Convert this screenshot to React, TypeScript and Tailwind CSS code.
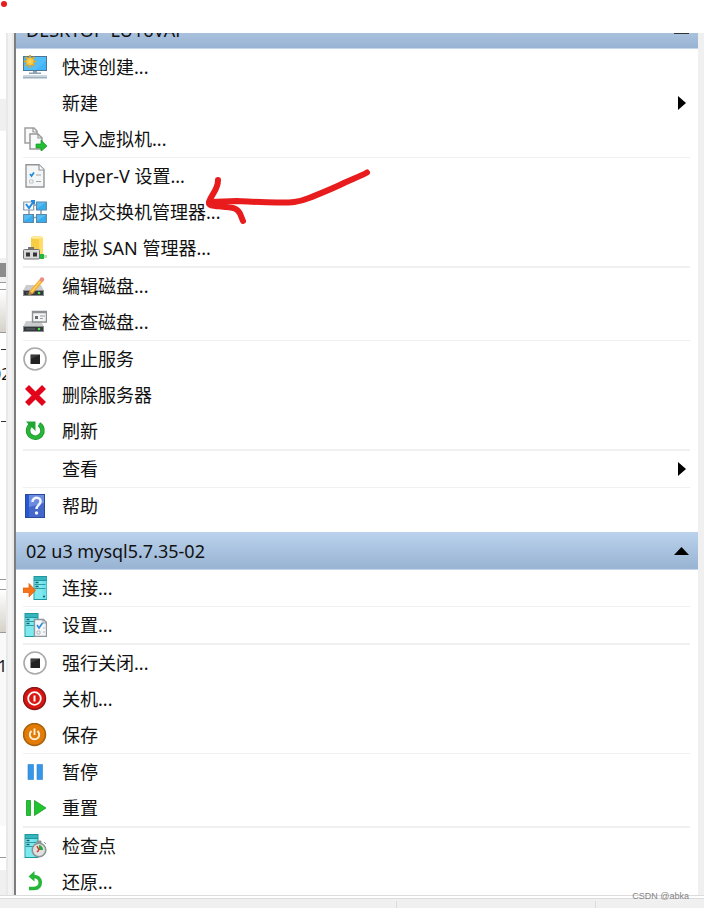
import React from 'react';

type IconName =
    | 'quickCreate' | 'import' | 'settings' | 'switch' | 'san' | 'editDisk' | 'inspectDisk'
    | 'stop' | 'remove' | 'refresh' | 'help' | 'connect' | 'vmSettings' | 'shutdown'
    | 'save' | 'pause' | 'reset' | 'checkpoint' | 'revert';

interface ActionItem {
    label: string;
    icon?: IconName;
    submenu?: boolean;
}

const hostActions: ActionItem[][] = [
    [
        {label: '快速创建...', icon: 'quickCreate'},
        {label: '新建', submenu: true},
        {label: '导入虚拟机...', icon: 'import'}
    ],
    [
        {label: 'Hyper-V 设置...', icon: 'settings'},
        {label: '虚拟交换机管理器...', icon: 'switch'},
        {label: '虚拟 SAN 管理器...', icon: 'san'}
    ],
    [
        {label: '编辑磁盘...', icon: 'editDisk'},
        {label: '检查磁盘...', icon: 'inspectDisk'}
    ],
    [
        {label: '停止服务', icon: 'stop'},
        {label: '删除服务器', icon: 'remove'},
        {label: '刷新', icon: 'refresh'}
    ],
    [{label: '查看', submenu: true}],
    [{label: '帮助', icon: 'help'}]
];

const machineActions: ActionItem[][] = [
    [{label: '连接...', icon: 'connect'}],
    [{label: '设置...', icon: 'vmSettings'}],
    [
        {label: '强行关闭...', icon: 'stop'},
        {label: '关机...', icon: 'shutdown'},
        {label: '保存', icon: 'save'}
    ],
    [
        {label: '暂停', icon: 'pause'},
        {label: '重置', icon: 'reset'}
    ],
    [
        {label: '检查点', icon: 'checkpoint'},
        {label: '还原...', icon: 'revert'}
    ]
];

// Tour de serveur turquoise, 14x24
const Server = () => (
    <>
        <path d="M0 0h14v24H0z" fill="#1f979f"/>
        <path d="M1 1h12v3H1z" fill="#36b5bd"/>
        <path d="M1 5h12v18H1z" fill="#72e2ea"/>
        <path d="M1 5h8v18H1z" fill="#8bf0f5" opacity=".5"/>
        <path d="M1 8.500h11M1 12.500h11" stroke="#2f9aa3"/>
        <path d="M2 6.500h3M2 10.500h3M9.500 20.500h2" stroke="#14626b" strokeWidth="1.500"/>
    </>
);

const Disk = () => (
    <>
        <path d="M3 13h15l3 6H0z" fill="#c9cbcd"/>
        <path d="M0 18h21v6H0z" fill="#8b8e91"/>
        <path d="M1 19h19v4H1z" fill="#35383a"/>
        <path d="M3 21h9" stroke="#65686a"/>
        <circle cx="16" cy="21" r="1.3" fill="#4be04b"/>
    </>
);

const icons: Record<IconName, React.ReactNode> = {
    quickCreate: (
        <>
            <path d="M0 1h24v15H0z" fill="#4a7696"/>
            <path d="M1 2h22v13H1z" fill="#42b4f8"/>
            <path d="M11 2h12v4L13 15H1V9z" fill="#6bcbff" opacity=".4"/>
            <path d="M10 16h4v1.500h4V19H6v-1.500h4z" fill="#8ea2b2"/>
            <path d="M0 20.500h24v3H0z" fill="#9db0c0"/>
            <path d="M0 21.500h24" stroke="#c8d4dc"/>
            <path d="M7 0v13M.8 6.500h12.400M2.500 2l9 9M11.500 2l-9 9" stroke="#eca414" strokeWidth="1.8"/>
            <circle cx="7" cy="6.500" r="3.600" fill="#ffc637"/>
            <circle cx="7" cy="6.500" r="1.500" fill="#ffdb70"/>
        </>
    ),
    import: (
        <>
            <path d="M2 1h9l3 3v12H2z" fill="#f9f9f9" stroke="#a0a0a0" strokeWidth="1.500"/>
            <path d="M7 7h8l4 4v11H7z" fill="#f9f9f9" stroke="#999" strokeWidth="1.500"/>
            <path d="M15 7v4h4M10 1v4h4" fill="none" stroke="#999" strokeWidth="1.200"/>
            <path d="M13 17h5v-4l6 6-6 5.500V21h-5z" fill="#22bd32" stroke="#159925" strokeWidth=".7"/>
        </>
    ),
    settings: (
        <>
            <path d="M3 .800h13l5 4.700V23H3z" fill="#f4f5f6" stroke="#929597" strokeWidth="1.400"/>
            <path d="M16 1v5h5" fill="#fff" stroke="#929597" strokeWidth="1.200"/>
            <path d="M7 10l1.500 2L11 8.500" fill="none" stroke="#208ade" strokeWidth="1.700"/>
            <path d="M6.500 16h3.500v3H6.500z" fill="none" stroke="#c0c3c5"/>
            <path d="M13 11h5M13 17.500h5" stroke="#a2a5a7" strokeWidth="1.200"/>
        </>
    ),
    switch: (
        <>
            <path d="M6 10v4M18 10v4M11 5h3M11 17.500h3" stroke="#8b9ca8" strokeWidth="1.500"/>
            <path d="M.7 2h10v8H.7z" fill="#f9fbfd" stroke="#8c9ba5" strokeWidth="1.200"/>
            <path d="M13.600 2h9.700v8h-9.700zM.7 14.500h9.700v8H.7zM13.600 14.500h9.700v8h-9.700z" fill="#37adf0" stroke="#5b87a5" strokeWidth="1.200"/>
            <path d="M14 2.500h9l-9 6zM1 15h9l-9 6zM14 15h9l-9 6z" fill="#89d3fa" opacity=".4"/>
            <path d="M3 4l3 4 5-7M8 1h3v3" fill="none" stroke="#208be3" strokeWidth="2"/>
        </>
    ),
    san: (
        <>
            <path d="M8 1.500C8-.200 20-.200 20 1.500V19H8z" fill="#f6cd43"/>
            <path d="M8 2c2 1 10 1 12 0v17h-4V3z" fill="#ffdc67"/>
            <ellipse cx="14" cy="1.600" rx="6" ry="1.400" fill="#ffeb9b"/>
            <path d="M16 19h8v3h-8z" fill="#b7dfb9"/>
            <path d="M16 18h5v5h-5z" fill="#27b63c"/>
            <path d="M5 13h6v-2H5z" fill="#777"/>
            <rect x=".5" y="13.500" width="16" height="9.500" rx="1" fill="#d8d8d8" stroke="#737373"/>
            <path d="M3 16.500h4v4H3zM10 16.500h4v4h-4z" fill="#353535"/>
        </>
    ),
    editDisk: (
        <>
            <g transform="translate(0 -2)"><Disk/></g>
            <path d="M5.500 21l1-4L17 5l3 2.500L9.500 20z" fill="#f7ae2e"/>
            <path d="M8 18.500L18.500 6" stroke="#ffd46c" strokeWidth="1.200"/>
            <path d="M5.500 21l1-4 3 2.500z" fill="#b98347"/>
            <circle cx="19" cy="5.500" r="2.200" fill="#ed8a84"/>
        </>
    ),
    inspectDisk: (
        <>
            <g transform="translate(0 -2)"><Disk/></g>
            <path d="M9.500 1.500h14v10.500h-14z" fill="#f3f4f4" stroke="#8d9193" strokeWidth="1.400"/>
            <path d="M10 2.500h13" stroke="#8d9193" strokeWidth="1.500"/>
            <path d="M12 6h3v3h-3z" fill="#666a6d"/>
            <path d="M17 6h5M17 8.500h3" stroke="#999da0"/>
        </>
    ),
    stop: (
        <>
            <circle cx="12" cy="12" r="11" fill="#fff" stroke="#a9a9a9" strokeWidth="1.600"/>
            <path d="M7.500 7.500h9.500v9.500H7.500z" fill="#222"/>
            <path d="M8 8h8l-8 4z" fill="#3c3c3c"/>
        </>
    ),
    remove: <path d="M4 4l17 17M21 4L4 21" fill="none" stroke="#e2041b" strokeWidth="5.600"/>,
    refresh: (
        <>
            <path d="M16 5.300a7.200 7.200 0 1 1-8.500.8" fill="none" stroke="#1e9a2d" strokeWidth="4.500"/>
            <path d="M16 5.300a7.200 7.200 0 1 1-8.500.8" fill="none" stroke="#26b638" strokeWidth="3"/>
            <path d="M3 2.500h9.500V12L9.500 9 6 6z" fill="#22a633"/>
        </>
    ),
    help: (
        <>
            <path d="M2 0h20v24H2z" fill="#28499f"/>
            <path d="M3 1h3v22H3z" fill="#2658d4"/>
            <path d="M6 1h15v22H6z" fill="#6c8ce0"/>
            <path d="M6 23V13L21 9v14z" fill="#4567c9"/>
            <path d="M9.500 8c0-6 9-5.500 8 0-.5 3-4.200 3.500-4 7" fill="none" stroke="#f2f5ff" strokeWidth="2.500"/>
            <circle cx="13.500" cy="19" r="1.700" fill="#f2f5ff"/>
        </>
    ),
    connect: (
        <>
            <g transform="translate(10.500 0)"><Server/></g>
            <path d="M0 12h6V7.500l6.500 6.800L6 21v-4.500H0z" fill="#f77316" stroke="#dd5705" strokeWidth=".7"/>
        </>
    ),
    vmSettings: (
        <>
            <g transform="translate(1.500 0)"><Server/></g>
            <path d="M11.500 6.500h9l3 3v14h-12z" fill="#f5f6f7" stroke="#8e979d" strokeWidth="1.300"/>
            <path d="M20 7v3h3" fill="none" stroke="#8e979d"/>
            <path d="M14 12l2 3 3.500-5" fill="none" stroke="#298edd" strokeWidth="1.600"/>
            <path d="M14 18h3v3h-3zM20 15h2M20 19h2" fill="none" stroke="#b2b9bd"/>
        </>
    ),
    shutdown: (
        <>
            <circle cx="11.500" cy="11.500" r="11" fill="#d9160f" stroke="#8f1717" strokeWidth="1.500"/>
            <circle cx="11.500" cy="11.500" r="6.300" fill="none" stroke="#fff" strokeWidth="1.800"/>
            <path d="M11.500 8.500v6" stroke="#fff" strokeWidth="2"/>
        </>
    ),
    save: (
        <>
            <circle cx="11.500" cy="11.500" r="11" fill="#e37b07" stroke="#a7610e" strokeWidth="1.500"/>
            <path d="M8.500 8a4.700 4.700 0 1 0 6 0M11.500 5.500V12" fill="none" stroke="#fff1d9" strokeWidth="1.900"/>
        </>
    ),
    pause: <path d="M5 4.500h5.500v15H5zM14 4.500h5.500v15H14z" fill="#3697e8" stroke="#2781cf" strokeWidth=".6"/>,
    reset: <path d="M3.500 4.500h4v15h-4zM11.500 4.500L23 12l-11.500 7.500z" fill="#1fc42f" stroke="#149d22" strokeWidth=".8"/>,
    checkpoint: (
        <>
            <g transform="translate(1.500 0)"><Server/></g>
            <circle cx="16" cy="16" r="6.800" fill="#dfe1e1" stroke="#8e9494" strokeWidth="1.600"/>
            <path d="M14 7h4v2h-4zM21 8l2 2" fill="#8e9494" stroke="#8e9494"/>
            <path d="M16 16v-5a5 5 0 0 1 4 5z" fill="#28a83d"/>
            <path d="M16 16l-2-4M16 16l-2 2" stroke="#db3030" strokeWidth="1.500"/>
        </>
    ),
    revert: (
        <>
            <path d="M10 6.500c9-1 10 12 1 12H6" fill="none" stroke="#27b638" strokeWidth="3.600"/>
            <path d="M5.500 6.500L11.500 1v10.500z" fill="#27b638"/>
        </>
    )
};

const ActionRow: React.FC<{ item: ActionItem }> = ({item}) => (
    <button type="button" className="flex w-full h-9 items-center gap-[15px] text-left">
        <svg viewBox="0 0 24 24" className="size-6 shrink-0" aria-hidden="true">
            {item.icon && icons[item.icon]}
        </svg>
        <span className="flex-1 whitespace-nowrap">{item.label}</span>
        {item.submenu && (
            <svg viewBox="0 0 8 16" className="mr-1 h-4 w-2" aria-hidden="true">
                <path d="M0 1v14l8-7z" fill="#000"/>
            </svg>
        )}
    </button>
);

const ActionGroups: React.FC<{ groups: ActionItem[][] }> = ({groups}) => (
    <div className="pr-2 pl-[7px]">
        {groups.map((group, index) => (
            <div key={index} className="border-[#f0f0f0] even:border-t not-first:odd:border-t-2">
                {group.map((item) => <ActionRow key={item.label} item={item}/>)}
            </div>
        ))}
    </div>
);

// Bord droit du panneau voisin, visible à gauche du séparateur
const NeighbourEdge = () => (
    <div className="flex w-[6px] shrink-0 flex-col overflow-hidden bg-white text-base">
        <div className="mt-[66px] h-8 bg-[#f0f0f0]"/>
        <div className="mt-[127px] h-[24px] border-y-[5px] border-[#f0f0f0] bg-[#8c8c8c]"/>
        <div className="h-2 border-y border-[#9a9a9a]"/>
        <div className="h-[43px] border-b border-[#9a9a9a] bg-linear-to-b from-white to-[#d6d2ca]"/>
        <div className="mt-4 ml-px h-px bg-[#333]"/>
        <div className="mt-3 -ml-2 h-6 w-6 leading-6">02</div>
        <div className="mt-[35px] ml-px h-px bg-[#333]"/>
        <div className="mt-[157px] h-[11px] border-y border-[#9a9a9a]"/>
        <div className="h-[43px] border-b border-[#9a9a9a] bg-linear-to-b from-white to-[#d6d2ca]"/>
        <div className="-ml-[2px] h-[193px] w-3 bg-[#f9f9f9] pt-[21px] leading-6">1</div>
        <div className="h-8 border-b border-[#9a9a9a]"/>
        <div className="mt-3 flex-1 bg-[#f0f0f0]"/>
    </div>
);

const App: React.FC = () => (
    <div className="relative min-h-screen overflow-hidden bg-white pt-[33px] text-lg text-[#111] font-['Noto_Sans','Noto_Sans_CJK_SC',sans-serif]">
        <div className="flex">
            <NeighbourEdge/>
            <div className="w-2 shrink-0 border-x-2 border-[#e9e9e9] bg-[#f3f3f3]"/>
            <main className="min-w-0 flex-1 border-l-2 border-[#7d7d7d] bg-white">
                <header className="flex h-4 items-end justify-between overflow-hidden border-b border-[#c5d7eb] bg-linear-to-b from-[#a9c1dd] to-[#98b3d3] pr-[9px] pl-[10px]">
                    <h2 className="mb-[6px] leading-6">DESKTOP-LU16VAP</h2>
                    <span className="mb-[14px] h-px w-[15px] bg-[#333]"/>
                </header>
                <ActionGroups groups={hostActions}/>
                <header className="mt-2 flex h-[38px] items-center justify-between border-b border-[#c5d7eb] bg-linear-to-b from-[#bad2ec] to-[#98b3d3] pr-[9px] pl-[10px]">
                    <h2>02 u3 mysql5.7.35-02</h2>
                    <button type="button" aria-label="折叠">
                        <svg viewBox="0 0 15 8" className="h-2 w-[15px]" aria-hidden="true">
                            <path d="M0 8L7.500 0 15 8z" fill="#000"/>
                        </svg>
                    </button>
                </header>
                <ActionGroups groups={machineActions}/>
            </main>
            <div className="w-[6px] shrink-0 bg-[#f0f0f0]"/>
        </div>
        {/* La barre d'état recouvre le bas de la dernière ligne */}
        <footer className="relative -mt-[5px] border-t border-[#dcdcdc] bg-white pt-[2px]">
            <div className="grid h-3 grid-cols-[396px_200px_1fr] border-t border-[#dcdcdc] bg-[#f0f0f0]">
                <span/>
                <span className="mt-[2px] border-x border-[#dcdcdc]"/>
            </div>
        </footer>

        {/* Annotations tracées à la main */}
        <span className="absolute top-px left-px size-[6px] rounded-full bg-[#e81c1c]"/>
        <svg viewBox="0 0 166 58" className="absolute top-[168px] left-[206px] h-[58px] w-[166px]" fill="none" stroke="#e81c1c" strokeWidth="6" strokeLinecap="round" strokeLinejoin="round" aria-hidden="true">
            <path d="M161 4.500c-5 3-13 6-22 10-14 7-25 11-36 15.500-12 5-20 4.500-32 4.500-16 0-28-1-40-1.500L4 34"/>
            <path d="M12 12c0 10-6 13-9 22-1 4 5 4 12 4.500 14 1 16 2 19 7l3 7.500"/>
        </svg>
        <p className="absolute right-[15px] bottom-[7px] text-[9px] leading-[14px] text-[#858585] font-['Liberation_Sans',sans-serif]">CSDN @abka</p>
    </div>
);

export default App;
